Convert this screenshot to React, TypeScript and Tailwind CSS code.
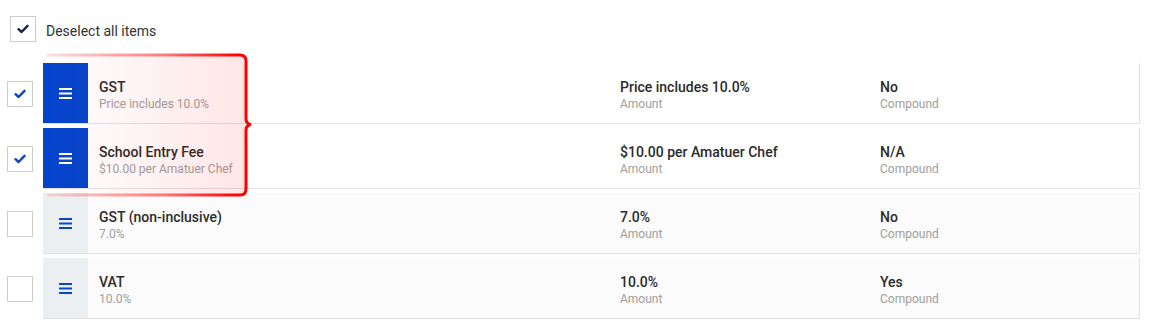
import React from "react";

type Row = {
  title: string;
  sub: string;
  amount: string;
  compound: string;
  checked: boolean;
};

const rows: Row[] = [
  { title: "GST", sub: "Price includes 10.0%", amount: "Price includes 10.0%", compound: "No", checked: true },
  { title: "School Entry Fee", sub: "$10.00 per Amatuer Chef", amount: "$10.00 per Amatuer Chef", compound: "N/A", checked: true },
  { title: "GST (non-inclusive)", sub: "7.0%", amount: "7.0%", compound: "No", checked: false },
  { title: "VAT", sub: "10.0%", amount: "10.0%", compound: "Yes", checked: false },
];

function Check({ color }: { color: string }) {
  return (
    <svg width="12" height="10" viewBox="0 0 12 10" fill="none">
      <path d="M1.5 5.2 L4.6 8 L10.5 1.8" stroke={color} strokeWidth="2.4" strokeLinecap="round" strokeLinejoin="round" />
    </svg>
  );
}

function Burger({ color }: { color: string }) {
  return (
    <svg width="13" height="11" viewBox="0 0 13 11">
      <rect x="0" y="0" width="13" height="2" fill={color} />
      <rect x="0" y="4.5" width="13" height="2" fill={color} />
      <rect x="0" y="9" width="13" height="2" fill={color} />
    </svg>
  );
}

export default function App() {
  return (
    <div className="relative w-[1151px] h-[335px] bg-white overflow-hidden" style={{ fontFamily: "Roboto, 'Liberation Sans', sans-serif" }}>
      <div className="flex items-center pl-[10px] pt-[16px] gap-[10px]">
        <div className="w-[26px] h-[26px] border border-[#cccccc] flex items-center justify-center">
          <Check color="#1b2547" />
        </div>
        <span className="text-[14px] text-[#333333] leading-[20px] mt-[3px]">Deselect all items</span>
      </div>
      <div className="flex flex-col gap-[4px] mt-[21px]">
        {rows.map((r, i) => (
          <div key={i} className="flex items-center h-[61px]">
            <div className="w-[43px] flex pl-[7px]">
              <div className="w-[26px] h-[26px] border border-[#cccccc] bg-white flex items-center justify-center">
                {r.checked && <Check color="#0a45cc" />}
              </div>
            </div>
            <div
              className={`flex h-[61px] w-[1097px] border-r border-b border-[#e2e2e2] ${r.checked ? "bg-white" : "bg-[#fbfbfb]"}`}
            >
              <div className={`w-[45px] h-[60px] flex items-center justify-center ${r.checked ? "bg-[#0444cc]" : "bg-[#eceff1]"}`}>
                <Burger color={r.checked ? "#ffffff" : "#0a45cc"} />
              </div>
              <div className="w-[532px] pl-[11px] pt-[16px]">
                <div className="text-[14px] leading-[16px] font-medium text-[#2b2b2b]">{r.title}</div>
                <div className="text-[12px] leading-[16px] mt-[1px] text-[#9e9e9e]">{r.sub}</div>
              </div>
              <div className="w-[260px] pt-[16px]">
                <div className="text-[14px] leading-[16px] font-medium text-[#2b2b2b]">{r.amount}</div>
                <div className="text-[12px] leading-[16px] mt-[1px] text-[#9e9e9e]">Amount</div>
              </div>
              <div className="flex-1 pt-[16px]">
                <div className="text-[14px] leading-[16px] font-medium text-[#2b2b2b]">{r.compound}</div>
                <div className="text-[12px] leading-[16px] mt-[1px] text-[#9e9e9e]">Compound</div>
              </div>
            </div>
          </div>
        ))}
      </div>
      <svg className="absolute left-0 top-0 pointer-events-none" width="270" height="210" viewBox="0 0 270 210">
        <defs>
          <linearGradient id="fillg" x1="47" y1="0" x2="247" y2="0" gradientUnits="userSpaceOnUse">
            <stop offset="0" stopColor="#ff0000" stopOpacity="0" />
            <stop offset="1" stopColor="#ff0000" stopOpacity="0.1" />
          </linearGradient>
          <linearGradient id="strokeg" x1="47" y1="0" x2="240" y2="0" gradientUnits="userSpaceOnUse">
            <stop offset="0" stopColor="#ff0000" stopOpacity="0.12" />
            <stop offset="0.6" stopColor="#ff0000" stopOpacity="0.5" />
            <stop offset="1" stopColor="#ff0000" stopOpacity="1" />
          </linearGradient>
        </defs>
        <path
          d="M47 55 L240 55 Q246 55 246 61 L246 119 Q246 123 250 124.5 Q246 126 246 130 L246 189 Q246 195 240 195 L47 195 Z"
          fill="url(#fillg)"
        />
        <path
          d="M47 55 L240 55 Q246 55 246 61 L246 119 Q246 123 250 124.5 Q246 126 246 130 L246 189 Q246 195 240 195 L47 195"
          fill="none"
          stroke="url(#strokeg)"
          strokeWidth="3"
          strokeLinejoin="round"
        />
      </svg>
    </div>
  );
}
